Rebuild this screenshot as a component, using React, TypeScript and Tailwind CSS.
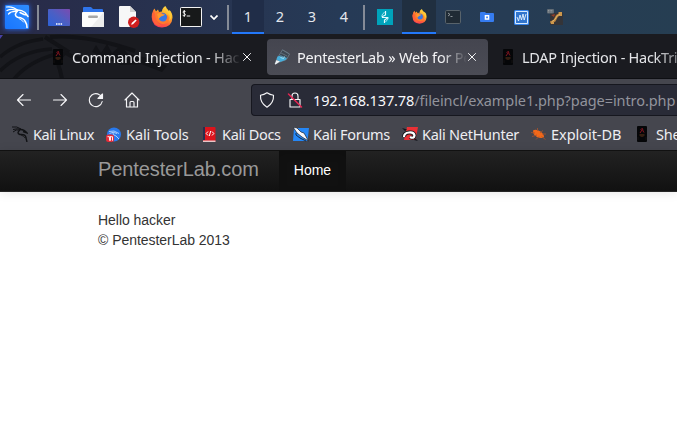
import React from 'react';

type P = { className?: string };

const Kali = ({ className }: P) => (
  <svg viewBox="0 0 24 24" className={className}>
    <defs>
      <linearGradient id="kali" x1="0" y1="1" x2="1" y2="0">
        <stop stopColor="#1976ff" />
        <stop offset="1" stopColor="#2e8cff" />
      </linearGradient>
    </defs>
    <rect width="24" height="24" rx="1" fill="url(#kali)" />
    <g fill="none" stroke="#fff" strokeWidth="1.2" strokeLinecap="round">
      <path d="M1.500 2Q8 1 13 5.500M2 5.500Q7 3 12.500 6M3.500 9Q6 6 12 6.500" />
      <path d="M12.500 5Q17 5 20 7.500L23 11.500M15 7.500L19 9.500L22 10" strokeWidth="1.5" />
      <path d="M12 6.500Q8.500 10 12.500 12.300Q19 13 20.500 17Q22 19 22 22.500" strokeWidth="1.600" />
      <path d="M14 13.500Q17.500 15 18.500 17" strokeWidth=".9" />
    </g>
  </svg>
);

const Desktop = ({ className }: P) => (
  <svg viewBox="0 0 22 17" className={className}>
    <defs>
      <linearGradient id="desk" x1="0" y1="1" x2="1" y2="0">
        <stop stopColor="#2d62d9" />
        <stop offset=".5" stopColor="#4b5fc4" />
        <stop offset="1" stopColor="#7b4bb0" />
      </linearGradient>
    </defs>
    <rect width="22" height="17" rx=".7" fill="url(#desk)" />
    <path d="M8 15h6.500" stroke="#fff" strokeWidth="1.600" strokeDasharray="1.5 .8" />
  </svg>
);

const Files = ({ className }: P) => (
  <svg viewBox="0 0 22 20" className={className}>
    <path d="M1 7V1Q1 0 2 0h7l2 2h9q1 0 1 1v5z" fill="#2f74ea" />
    <rect y="5" width="22" height="15" rx=".7" fill="#fbfbfb" />
    <path d="M22 5v15H9z" fill="#ededed" />
    <rect x="6" y="8.500" width="10" height="2.500" rx="1.2" fill="#a6a6a6" />
  </svg>
);

const Editor = ({ className }: P) => (
  <svg viewBox="0 0 21 22" className={className}>
    <path d="M0 1Q0 0 1 0h10l6 6v14q0 1-1 1H1q-1 0-1-1z" fill="#f7f7f7" />
    <path d="M11 0v6h6z" fill="#d2d2d2" />
    <circle cx="14.700" cy="16.300" r="5.700" fill="#d01f1f" />
    <path d="M12.200 18.800l.5-1.800 3.800-3.600 1.200 1.200-3.700 3.700z" fill="#fff" />
  </svg>
);

const Firefox = ({ className, id }: P & { id: string }) => (
  <svg viewBox="0 0 22 22" className={className}>
    <defs>
      <linearGradient id={id} x1=".8" y1="0" x2=".2" y2="1">
        <stop stopColor="#ffe34c" />
        <stop offset=".35" stopColor="#ffad28" />
        <stop offset=".65" stopColor="#ff6038" />
        <stop offset="1" stopColor="#f52e62" />
      </linearGradient>
    </defs>
    <path d="M2 5L3.500 2.500 5 5.500 7 3.500 8 6 11 5.500Q11 2 14.500 0Q15 3 18 5L18.500 4Q21.500 7 21.500 11.500Q21 21 11 21.500Q1 21 .7 11Q.5 8 2 5z" fill={`url(#${id})`} />
    <circle cx="11.300" cy="11.500" r="4.800" fill="#326fdf" />
    <path d="M4 7Q8 4.500 11 7.500L14 8Q13 10 10 10Q7.500 11 8 13Q10 16 14 14Q17 12 15.500 8Q20 12 16 17Q10 20 6 15Q3 12 4 7z" fill="#ff7b2d" />
    <circle cx="12" cy="11.800" r="3.700" fill="#3978e4" />
    <path d="M6 8Q9 6 11 8L14 8.500Q12.500 10 10 10.500L7.500 13z" fill="#ff9a2d" />
    <path d="M1 10Q1 20 11 20Q5 16 4 9L3 3z" fill="#ff6338" />
    <path d="M15 1Q15 5 18 8Q20 11 18 15Q22 11 20 7Q17 5 15 1z" fill="#ffcb38" />
  </svg>
);

const Terminal = ({ className }: P) => (
  <svg viewBox="0 0 22 20" className={className}>
    <rect x=".5" y=".5" width="21" height="19" rx=".8" fill="#17191a" stroke="#f3f3f3" />
    <path d="M5.500 4.500Q3 3.500 3 5Q3 6 4.500 6.500Q6 7 5 8.500Q4 9.300 2.700 8.300M4.300 3v6.800M6.700 9h3.500" fill="none" stroke="#fff" strokeWidth=".9" />
  </svg>
);

const Burp = ({ className }: P) => (
  <svg viewBox="0 0 16 16" className={className}>
    <path d="M0 0h16v16H0z" fill="#00a3bb" />
    <path d="M8.500 2v4L5.500 7.500V8.500H10.500V9L7.500 11v3" fill="none" stroke="#e5fbff" strokeWidth="1.200" />
    <path d="M7.500 3L5 6v2M8.500 13l2.500-3V8" fill="none" stroke="#e5fbff" strokeWidth=".7" />
  </svg>
);

const SmallTerminal = ({ className }: P) => (
  <svg viewBox="0 0 16 14" className={className}>
    <rect x=".5" y=".5" width="15" height="13" rx="1.2" fill="#202b35" stroke="#58636b" />
    <path d="M3 3l2 1.500L3 6M5.500 6.500h2" fill="none" stroke="#a8afb2" strokeWidth=".8" />
  </svg>
);

const SmallFolder = ({ className }: P) => (
  <svg viewBox="0 0 14 10" className={className}>
    <path d="M0 1Q0 0 1 0h4l1 1h7q1 0 1 1v7q0 1-1 1H1q-1 0-1-1z" fill="#367cf0" />
    <path d="M4.700 3h4.600v4.800H4.700z" fill="#fff" />
    <path d="M6.200 4.600h1.700v1.700H6.200z" fill="#367cf0" />
  </svg>
);

const Wave = ({ className }: P) => (
  <svg viewBox="0 0 15 15" className={className}>
    <rect width="15" height="15" rx="1.5" fill="#3584ed" />
    <path d="M1.500 1.500h12v12h-12z" fill="#3175cd" stroke="#d6eaff" strokeWidth="1" />
    <path d="M3 7l1.500 4L6 5l1.500 5L9 4l1.200 6L12 4" fill="none" stroke="#e5f3ff" strokeWidth=".9" />
  </svg>
);

const Cable = ({ className }: P) => (
  <svg viewBox="0 0 16 16" className={className}>
    <path d="M3 4h13v12H3z" fill="#343438" />
    <path d="M4 13.500L7.500 11.500 10 7 14 4.500" fill="none" stroke="#b8813e" strokeWidth="2.500" />
    <path d="M3 12.500h4v2.500H4zM11.500 3H15v4h-3z" fill="#cc974c" />
    <path d="M5 12.500l3-2L10 7l3-2" fill="none" stroke="#e2b568" />
    <path d="M4 6l3 2 1-3z" fill="#953f29" />
    <rect width="7" height="4.500" rx="1" fill="#626c75" />
    <path d="M1 1.500h5M1 3h5" stroke="#b4b8bb" strokeWidth=".6" strokeDasharray="1 .6" />
  </svg>
);

const Device = ({ className }: P) => (
  <svg viewBox="0 0 10 16" className={className}>
    <rect width="10" height="16" rx="1" fill="#050608" />
    <path d="M3.500 3.500l2-1 .5 2.500 1 1.500M5 4L3 7" stroke="#851521" fill="none" />
    <path d="M2.500 9h5" stroke="#713e1e" strokeWidth=".9" />
    <path d="M3.500 10.500h3" stroke="#3d2114" strokeWidth=".8" />
    <path d="M1 14v-3M9 14v-3" stroke="#1b1715" strokeWidth=".7" />
  </svg>
);

const Flask = ({ className }: P) => (
  <svg viewBox="0 0 17 16" className={className}>
    <path d="M8.500 .8L15.500 5 12.500 10.500 4.500 13.500 1 15 2.500 10.500z" fill="#3d4651" stroke="#6f7f8b" strokeWidth=".8" />
    <path d="M3.500 7.500L7 6.500 13 9 11.500 11 6 13 2.500 10.500z" fill="#48aedb" />
    <path d="M2.500 11l3.500 1.500-4.500 3L.8 15z" fill="#edf1f3" />
    <path d="M8.500 1l7 4M6 7l5 2M7 4l6 3" stroke="#697783" strokeWidth=".8" />
    <path d="M6.500 8.500l3 1 1-2" stroke="#a5e9ff" strokeWidth=".9" fill="none" />
  </svg>
);

const Close = ({ className }: P) => (
  <svg viewBox="0 0 8 8" className={className}><path d="M.2.2l7.600 7.600m0-7.600L.2 7.800" stroke="#f2f2f4" strokeWidth="1" /></svg>
);

const KaliBlack = ({ className }: P) => (
  <svg viewBox="0 0 16 16" className={className}>
    <g fill="none" stroke="#101114" strokeWidth="1.4">
      <path d="M0 1Q5 0 9 3M1 3.500Q6 2 9 3.500M1 6Q4 3 8 4" strokeWidth="1" />
      <path d="M8 3.500Q12 3 15 7L11 5.500M8 4Q4 7 8 8.500Q14 8 14 12L15 16" />
      <path d="M9 9Q12 10 13 12" strokeWidth=".8" />
    </g>
  </svg>
);

const Tools = ({ className }: P) => (
  <svg viewBox="0 0 15 15" className={className}>
    <circle cx="8" cy="7.500" r="7" fill="#2879ed" />
    <path d="M3 4.500Q8 2.500 13 6.500M3.500 6.500Q7 4 11 6.500M7 5.500Q6 8 10 9L13 12" stroke="#c8e1ff" strokeWidth=".8" fill="none" />
    <rect y="7.500" width="8" height="7.500" rx="2.500" fill="#e52b37" />
    <path d="M1.500 9.700h2v4M4.500 9.200v4.500M4.500 9.700h2v4" stroke="#fff" fill="none" strokeWidth=".9" />
  </svg>
);

const Docs = ({ className }: P) => (
  <svg viewBox="0 0 13 15" className={className}>
    <rect width="12.500" height="15" rx="1" fill="#dc141c" />
    <path d="M0 0h2v13H0z" fill="#292e4d" />
    <path d="M0 13.500h12.500V15H0z" fill="#e7c7c9" />
    <path d="M5 4.500L3.200 6.500 5 8.500M9 4.500l1.800 2L9 8.500M7.700 4L6.300 9" stroke="#fff" fill="none" />
  </svg>
);

const Forums = ({ className }: P) => (
  <svg viewBox="0 0 16 15" className={className}>
    <path d="M1 1h15l-1.500 13H0z" fill="#2587f6" />
    <path d="M0 0l4 1 4 4 3 1 4.500 8-6.500-4-5-4z" fill="#f6f7fb" stroke="#18202b" strokeWidth=".7" />
    <path d="M3 6v2l4 3 6 3" fill="none" stroke="#10151e" strokeWidth=".8" />
  </svg>
);

const NetHunter = ({ className }: P) => (
  <svg viewBox="0 0 16 14" className={className}>
    <path d="M5 0h11l-2.500 13H2z" fill="#e93035" />
    <path d="M2 10Q2 6 7 5.500Q12 5 12.500 8.500Q12 12 8 10" stroke="#15171b" strokeWidth="4" fill="none" />
    <path d="M2 10Q2 6 7 5.500Q12 5 12.500 8.500Q12 12 8 10" stroke="#fff" strokeWidth="2.200" fill="none" />
    <path d="M0 1l5 1.500L3 4zM13 11l3 3-4-1z" fill="#111319" />
  </svg>
);

const Exploit = ({ className }: P) => (
  <svg viewBox="0 0 15 12" className={className}>
    <path d="M2 2.500Q5 .5 9.500 3.500Q13 6 13 9Q11 11 6 9Q2 7 2 2.500z" fill="#f26819" />
    <path d="M0 4.500l4 .5M1 8.500l5-1.500M6.500 0v3M12 2.500L9 5M15 6h-4M5 11.500l3-3M14.500 11.500l-4-3" stroke="#a8532c" strokeWidth=".8" />
  </svg>
);

const Sep = ({ className = '' }: P) => <i className={`h-[25px] w-[2px] shrink-0 bg-[#858b97] ${className}`} />;

function Panel() {
  return (
    <header className="flex h-[34px] items-center overflow-hidden bg-linear-to-r from-[#282a48] via-[#263a56] to-[#263e52]">
      <Kali className="ml-[5px] size-6 shrink-0 shadow-[0_0_5px_#286fff]" />
      <Sep className="ml-2" />
      <Desktop className="ml-[9px] h-[17px] w-[22px] shrink-0" />
      <Files className="ml-3 h-5 w-[22px] shrink-0" />
      <Editor className="ml-[15px] h-[22px] w-[21px] shrink-0" />
      <Firefox id="fox-large" className="ml-[11px] size-[22px] shrink-0" />
      <Terminal className="ml-[7px] h-5 w-[22px] shrink-0" />
      <svg viewBox="0 0 8 5" className="ml-2 h-[5px] w-2 shrink-0"><path d="M.5.5L4 4 7.500.5" fill="none" stroke="#fff" strokeWidth="1.700" /></svg>
      <Sep className="ml-[9px]" />
      <nav className="ml-[3px] flex h-full shrink-0 font-['Noto_Sans',sans-serif] text-[14.500px] text-[#e4e7ec]">
        {[1, 2, 3, 4].map((n) => (
          <span key={n} className={`flex w-8 items-center justify-center border-b-2 pt-px ${n === 1 ? 'border-[#2378fa] bg-[#202d48]' : 'border-transparent'}`}>{n}</span>
        ))}
      </nav>
      <Sep className="ml-[3px]" />
      <Burp className="ml-3 size-4 shrink-0" />
      <span className="ml-[9px] flex h-full w-[34px] shrink-0 items-center justify-center border-b-2 border-[#2378fa] bg-[#202f40]">
        <Firefox id="fox-small" className="mt-px size-[15px]" />
      </span>
      <SmallTerminal className="ml-[9px] h-[14px] w-4 shrink-0" />
      <SmallFolder className="ml-[19px] h-[10px] w-[14px] shrink-0" />
      <Wave className="ml-5 size-[15px] shrink-0" />
      <Cable className="ml-[18px] size-4 shrink-0" />
    </header>
  );
}

function Tabs() {
  return (
    <div className="relative flex h-[45px] items-start overflow-hidden border-b border-[#0e0f13] bg-[#1a1b20] pt-[5px]">
      <svg viewBox="0 0 170 45" className="absolute top-0 left-0 h-[45px] w-[170px]">
        <g fill="none" stroke="#121317" strokeWidth="3.500">
          <path d="M0 23Q17 8 43 5M0 37Q20 17 52 15M14 45Q28 28 56 20" />
          <path d="M45 3L67 17Q55 26 60 36L62 45M50 3Q85 0 135 17" strokeWidth="4" />
          <path d="M66 19Q82 30 112 25Q136 22 160 34" strokeWidth="4" />
        </g>
        <path d="M92 18L96 11l5 8 6-9 5 9 9-8 7 9 20 4 19 8-5 6-21-8-20 1z" fill="#121317" />
        <path d="M0 1h3L0 5z" fill="#4740a4" />
      </svg>
      <div className="relative ml-[51px] flex h-9 w-[215px] shrink-0 items-center">
        <Device className="ml-[2px] h-4 w-[10px] shrink-0" />
        <span className="ml-[9px] w-[169px] whitespace-nowrap mask-r-from-82% mask-r-to-100% font-['Noto_Sans',sans-serif] text-[14.500px] leading-5 tracking-[-.22px] text-[#e4e5e8]">Command Injection - Hac</span>
        <Close className="ml-[2px] size-2 shrink-0" />
      </div>
      <div className="relative ml-px flex h-9 w-[221px] shrink-0 items-center rounded-[4px] bg-linear-to-b from-[#44454f] to-[#4b4c55]">
        <Flask className="ml-[7px] h-4 w-[17px] shrink-0" />
        <span className="ml-[6px] w-[170px] whitespace-nowrap mask-r-from-85% mask-r-to-100% font-['Noto_Sans',sans-serif] text-[14.500px] leading-5 tracking-[-.22px] text-[#f4f4f6]">PentesterLab » Web for Pe</span>
        <Close className="ml-px size-2 shrink-0" />
      </div>
      <div className="relative ml-[15px] flex h-9 w-[174px] shrink-0 items-center">
        <Device className="h-4 w-[10px] shrink-0" />
        <span className="ml-[9px] shrink-0 whitespace-nowrap mask-r-from-85% mask-r-to-115% font-['Noto_Sans',sans-serif] text-[14.500px] leading-5 tracking-[-.28px] text-[#e4e5e8]">LDAP Injection - HackTri</span>
      </div>
    </div>
  );
}

const stroke = { fill: 'none', stroke: '#f5f5f7', strokeWidth: 1.15, strokeLinecap: 'round' as const, strokeLinejoin: 'round' as const };

function Toolbar() {
  return (
    <div className="flex h-[42px] items-center bg-[#45464e]">
      <svg viewBox="0 0 16 16" className="ml-4 size-4 shrink-0" {...stroke}><path d="M14.500 8H1.500M7 2.500L1.500 8 7 13.500" /></svg>
      <svg viewBox="0 0 16 16" className="ml-5 size-4 shrink-0" {...stroke}><path d="M1.500 8h13M9 2.500L14.500 8 9 13.500" /></svg>
      <svg viewBox="0 0 16 16" className="ml-5 size-4 shrink-0" {...stroke}><path d="M14 6A6.500 6.500 0 1 0 14.200 9.500" /><path d="M14.500 2v4.500H10z" fill="#f5f5f7" /></svg>
      <svg viewBox="0 0 16 16" className="ml-5 size-4 shrink-0" {...stroke}><path d="M1 8L8 1l7 7M2.500 6.500V15h11V6.500M6 15v-4.500q0-1 1-1h2q1 0 1 1V15" /></svg>
      <div className="ml-[111px] flex h-8 flex-1 items-center rounded-l-[4px] border border-r-0 border-[#16171f] bg-[#292b37]">
        <svg viewBox="0 0 16 16" className="ml-[7px] size-4 shrink-0" {...stroke}><path d="M8 .8Q11 2.800 14.500 3.300Q15 11 8 15.200Q1 11 1.500 3.300Q5 2.800 8 .8z" /></svg>
        <svg viewBox="0 0 16 16" className="ml-3 size-4 shrink-0" {...stroke}><path d="M3 7.500h10V15H3zM5 7.500V4Q5 1 8 1t3 3v3.500" /><path d="M1.500 2l13 13" stroke="#e32552" strokeWidth="1.500" /></svg>
        <span className="ml-[10px] whitespace-nowrap font-['Noto_Sans',sans-serif] text-[14.500px] leading-5 tracking-[-.07px] text-[#92939c]"><span className="tracking-[-.12px] text-[#f8f8fb]">192.168.137.78</span>/fileincl/example1.php?page=intro.php</span>
      </div>
    </div>
  );
}

function Bookmark({ icon, label, width, text }: { icon: React.ReactNode; label: string; width: string; text: string }) {
  return (
    <div className={`flex shrink-0 items-center ${width}`}>
      <span className="flex w-[21px] shrink-0 items-center">{icon}</span>
      <span className={`whitespace-nowrap font-['Noto_Sans',sans-serif] text-[14.500px] leading-5 text-[#eeeef2] ${text}`}>{label}</span>
    </div>
  );
}

function Bookmarks() {
  return (
    <div className="flex h-[29px] items-center bg-[#45464e] pb-[3px] pl-3">
      <Bookmark width="w-[93px]" icon={<KaliBlack className="size-4" />} label="Kali Linux" text="tracking-[-.42px]" />
      <Bookmark width="w-[97px]" icon={<Tools className="ml-px size-[15px]" />} label="Kali Tools" text="tracking-[-.1px]" />
      <Bookmark width="w-[90px]" icon={<Docs className="ml-px h-[15px] w-[13px]" />} label="Kali Docs" text="-ml-px tracking-[-.33px]" />
      <Bookmark width="w-[109px]" icon={<Forums className="ml-px h-[15px] w-4" />} label="Kali Forums" text="tracking-[-.28px]" />
      <Bookmark width="w-[129px]" icon={<NetHunter className="ml-px h-[14px] w-4" />} label="Kali NetHunter" text="tracking-[-.27px]" />
      <Bookmark width="w-[104px]" icon={<Exploit className="ml-px h-3 w-[15px]" />} label="Exploit-DB" text="tracking-[-.04px]" />
      <Bookmark width="w-[43px]" icon={<Device className="ml-[3px] h-4 w-[10px]" />} label="She" text="ml-px tracking-[-.25px]" />
    </div>
  );
}

export default function App() {
  return (
    <main className="h-[448px] w-[677px] overflow-hidden bg-white">
      <Panel />
      <Tabs />
      <Toolbar />
      <Bookmarks />
      <div className="flex h-[42px] border-t border-b border-t-[#111] border-b-[#252525] bg-linear-to-b from-[#222] to-[#111] font-['Liberation_Sans',Arial,sans-serif] shadow-[0_1px_10px_rgba(0,0,0,0.1)]">
        <span className="ml-[98px] w-[181px] shrink-0 pt-2 text-[20px] leading-5 tracking-[-.1px] text-[#999]">PentesterLab.com</span>
        <span className="flex w-[67px] items-center justify-center bg-[#111] pb-[2px] text-[14px] leading-5 text-white shadow-[inset_0_3px_8px_rgba(0,0,0,0.125)]">Home</span>
      </div>
      <div className="pt-[18px] pl-[98px] font-['Liberation_Sans',Arial,sans-serif] text-[14px] leading-5 tracking-[-.04px] text-[#333]">
        <p>Hello hacker</p>
        <p>© PentesterLab 2013</p>
      </div>
    </main>
  );
}
